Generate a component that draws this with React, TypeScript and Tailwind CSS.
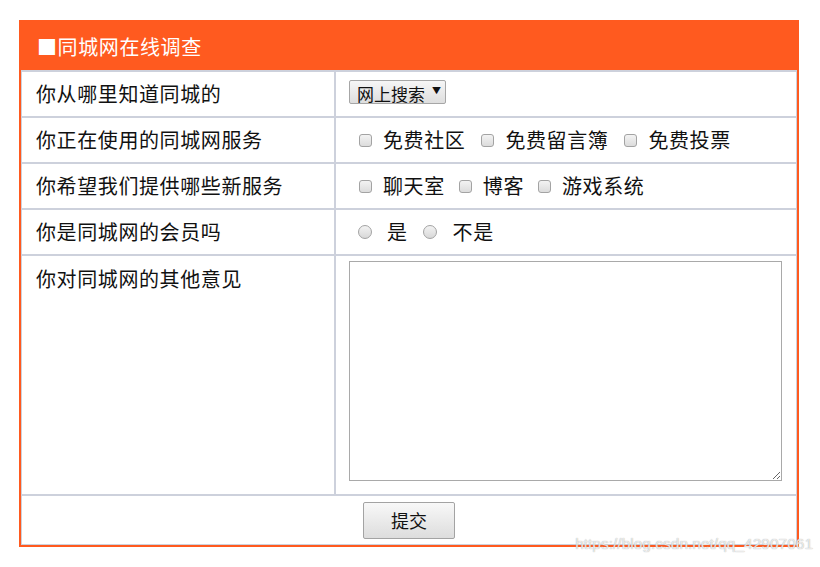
import type { ReactNode } from 'react'

const font = { fontFamily: '"Noto Sans CJK SC", "Noto Sans", sans-serif' }

function Checkbox() {
  return (
    <span className="inline-block h-[13px] w-[13px] shrink-0 rounded-[3px] border border-[#a3a3a3] bg-gradient-to-b from-[#f3f3f3] to-[#dcdcdc]" />
  )
}

function Radio() {
  return (
    <span className="inline-block h-[14px] w-[14px] shrink-0 rounded-full border border-[#a3a3a3] bg-gradient-to-b from-[#f3f3f3] to-[#d8d8d8]" />
  )
}

function Option({ kind, label, gap }: { kind: 'check' | 'radio'; label: string; gap: string }) {
  return (
    <label className={`flex items-center ${gap}`}>
      {kind === 'check' ? <Checkbox /> : <Radio />}
      <span>{label}</span>
    </label>
  )
}

function Row({ label, children }: { label: string; children: ReactNode }) {
  return (
    <div className="grid h-[46px] grid-cols-[314px_1fr] border-t-2 border-[#cdd1dc]">
      <div className="flex items-center border-r-2 border-[#cdd1dc] pl-[14px]">{label}</div>
      <div className="flex items-center">{children}</div>
    </div>
  )
}

export default function App() {
  return (
    <div className="min-h-[567px] bg-white pt-[20px] pl-[19px]" style={font}>
      <div className="relative w-[780px] border-2 border-[#ff5a1f] text-[20px] tracking-[0.6px] text-[#111]">
        <div className="flex h-[48px] items-center bg-[#ff5a1f] pt-[2px] pl-[16px] text-white">■同城网在线调查</div>
        <div className="border-x border-b border-[#cdd1dc]">
          <Row label="你从哪里知道同城的">
            <div className="mb-[5px] ml-[13px] flex h-[24px] w-[97px] items-center rounded-[2px] border border-[#a6a6a6] bg-gradient-to-b from-[#f6f6f6] to-[#dedede] pt-[3px] pl-[7px] text-[17px] leading-[19px] tracking-normal">
              <span>网上搜索</span>
              <span className="mb-[6px] ml-[7px] text-[9px] leading-none">▼</span>
            </div>
          </Row>
          <Row label="你正在使用的同城网服务">
            <div className="flex items-center gap-[16px] pl-[23px]">
              <Option kind="check" label="免费社区" gap="gap-[11px]" />
              <Option kind="check" label="免费留言簿" gap="gap-[11px]" />
              <Option kind="check" label="免费投票" gap="gap-[11px]" />
            </div>
          </Row>
          <Row label="你希望我们提供哪些新服务">
            <div className="flex items-center gap-[14px] pl-[23px]">
              <Option kind="check" label="聊天室" gap="gap-[11px]" />
              <Option kind="check" label="博客" gap="gap-[11px]" />
              <Option kind="check" label="游戏系统" gap="gap-[11px]" />
            </div>
          </Row>
          <Row label="你是同城网的会员吗">
            <div className="flex items-center gap-[15px] pl-[22px]">
              <Option kind="radio" label="是" gap="gap-[15px]" />
              <Option kind="radio" label="不是" gap="gap-[16px]" />
            </div>
          </Row>
          <div className="grid h-[240px] grid-cols-[314px_1fr] border-t-2 border-[#cdd1dc]">
            <div className="border-r-2 border-[#cdd1dc] pt-[8px] pl-[14px] leading-[30px]">你对同城网的其他意见</div>
            <div className="pt-[5px] pr-[14px] pl-[13px]">
              <textarea className="block h-[220px] w-full border border-[#a9a9a9] bg-white text-[14px] outline-none" />
            </div>
          </div>
          <div className="flex h-[50px] items-center justify-center border-t-2 border-[#cdd1dc]">
            <button
              type="button"
              className="h-[37px] w-[92px] rounded-[2px] border border-[#a3a3a3] bg-gradient-to-b from-[#f8f8f8] to-[#dddddd] text-[18px] tracking-normal text-[#111]"
            >
              提交
            </button>
          </div>
        </div>
        <span
          className="absolute right-[-16px] bottom-[-10px] text-[15.5px] tracking-normal text-[rgba(255,255,255,0.75)] [text-shadow:0_0_1px_#9a9a9a]"
          style={{ fontFamily: '"Liberation Sans", Arial, sans-serif' }}
        >
          https://blog.csdn.net/qq_42907061
        </span>
      </div>
    </div>
  )
}
